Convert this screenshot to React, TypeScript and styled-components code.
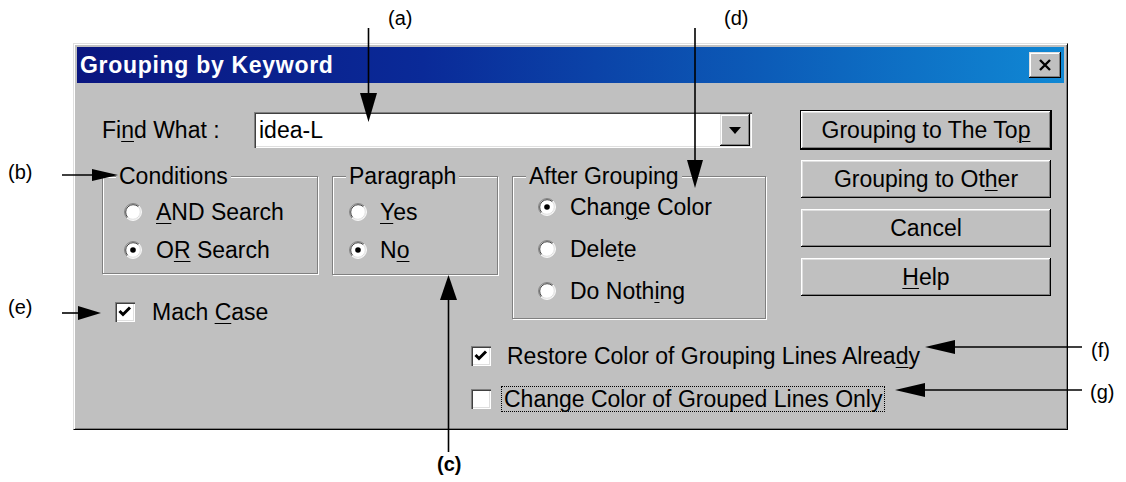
import React from "react";
import styled, { createGlobalStyle } from "styled-components";

const Global = createGlobalStyle`
  html, body { margin: 0; padding: 0; background: #ffffff; }
  body { font-family: "Liberation Sans", Arial, sans-serif; }
`;

const Page = styled.div`
  position: relative;
  width: 1126px;
  height: 482px;
  overflow: hidden;
  background: #ffffff;
  padding: 43px 0 0 73px;
  box-sizing: border-box;
`;

const Dialog = styled.div`
  width: 995px;
  height: 387px;
  box-sizing: border-box;
  background: #c0c0c0;
  border: 1px solid;
  border-color: #dfdfdf #000000 #000000 #dfdfdf;
  box-shadow: inset 1px 1px #ffffff, inset -1px -1px #808080;
  padding: 3px;
  display: flex;
  flex-direction: column;
  font-family: "Liberation Sans", Arial, sans-serif;
  font-size: 23px;
  color: #000;
`;

const TitleBar = styled.div`
  height: 36px;
  flex: none;
  display: flex;
  align-items: center;
  justify-content: space-between;
  padding: 0 3px 0 3px;
  background: linear-gradient(to right, #0a1680 0%, #0a2a98 35%, #0c5cb8 70%, #1088d4 100%);
  color: #ffffff;
  font-weight: bold;
  font-size: 23px;
  letter-spacing: 0.7px;
`;

const CloseButton = styled.div`
  width: 32px;
  height: 26px;
  box-sizing: border-box;
  background: #c0c0c0;
  box-shadow: inset -1px -1px #000, inset 1px 1px #dfdfdf, inset -2px -2px #808080, inset 2px 2px #fff;
  display: flex;
  align-items: center;
  justify-content: center;
`;

const Body = styled.div`
  flex: 1;
  display: grid;
  grid-template-columns: 723px 252px;
  padding-right: 12px;
`;

const MainColumn = styled.div`
  display: flex;
  flex-direction: column;
  padding: 29px 0 0 25px;
`;

const FindRow = styled.div`
  display: flex;
  align-items: center;
  height: 36px;
`;

const FieldLabel = styled.div`
  width: 152px;
`;

const Field = styled.div`
  width: 498px;
  height: 36px;
  box-sizing: border-box;
  background: #fff;
  box-shadow: inset 1px 1px #808080, inset 2px 2px #404040, inset -1px -1px #fff, inset -2px -2px #dfdfdf;
  display: flex;
  align-items: center;
  justify-content: space-between;
  padding: 2px 2px 2px 5px;
`;

const DropButton = styled.div`
  width: 30px;
  height: 32px;
  box-sizing: border-box;
  background: #c0c0c0;
  box-shadow: inset -1px -1px #000, inset 1px 1px #dfdfdf, inset -2px -2px #808080, inset 2px 2px #fff;
  display: flex;
  align-items: center;
  justify-content: center;
`;

const GroupArea = styled.div`
  margin-top: 17px;
  display: grid;
  grid-template-columns: 216px 166px 254px;
  grid-template-rows: auto auto;
  column-gap: 14px;
  align-items: start;
`;

const GroupBox = styled.fieldset<{ $padLeft: number; $padTop: number; $gap: number; $padBottom: number; $rows?: string }>`
  margin: 0;
  min-width: 0;
  box-sizing: border-box;
  border: 1px solid #808080;
  box-shadow: inset 1px 1px #fff, 1px 1px #fff;
  padding: ${(p) => p.$padTop}px 4px ${(p) => p.$padBottom}px ${(p) => p.$padLeft}px;
  display: flex;
  flex-direction: column;
  gap: ${(p) => p.$gap}px;
  grid-row: ${(p) => p.$rows || "1"};
`;

const Legend = styled.legend<{ $shift: number }>`
  margin-left: ${(p) => p.$shift}px;
  padding: 0 3px;
  line-height: 22px;
  background: #c0c0c0;
`;

const OptionRow = styled.div<{ $gap: number }>`
  height: 30px;
  display: flex;
  align-items: center;
  gap: ${(p) => p.$gap}px;
  white-space: nowrap;
`;

const Key = styled.span`
  text-decoration: underline;
  text-underline-offset: 3px;
  text-decoration-thickness: 1px;
`;

const MatchRow = styled.div`
  grid-column: 1 / 3;
  grid-row: 2;
  margin-top: 22px;
  padding-left: 13px;
`;

const BottomOptions = styled.div`
  margin-top: 14px;
  padding-left: 369px;
  display: flex;
  flex-direction: column;
  gap: 13px;
`;

const CheckBox = styled.span`
  width: 20px;
  height: 20px;
  flex: none;
  box-sizing: border-box;
  background: #fff;
  box-shadow: inset 1px 1px #808080, inset 2px 2px #404040, inset -1px -1px #fff, inset -2px -2px #dfdfdf;
  display: flex;
  align-items: center;
  justify-content: center;
`;

const FocusText = styled.span`
  outline: 1px dotted #000;
  outline-offset: 0;
  padding: 0 2px;
  line-height: 24px;
`;

const ButtonColumn = styled.div`
  display: flex;
  flex-direction: column;
  gap: 9px;
  padding-top: 27px;
`;

const PushButton = styled.div<{ $default?: boolean }>`
  height: 40px;
  box-sizing: border-box;
  background: #c0c0c0;
  border: 1px solid ${(p) => (p.$default ? "#000" : "transparent")};
  box-shadow: inset -1px -1px #000, inset 1px 1px #fff, inset -2px -2px #808080, inset 2px 2px #dfdfdf;
  display: flex;
  align-items: center;
  justify-content: center;
  white-space: nowrap;
`;

const Label = styled.div<{ $bold?: boolean }>`
  position: absolute;
  font-family: "Liberation Sans", Arial, sans-serif;
  font-size: 20px;
  line-height: 22px;
  font-weight: ${(p) => (p.$bold ? "bold" : "normal")};
  color: #000;
`;

const Overlay = styled.svg`
  position: absolute;
  left: 0;
  top: 0;
  pointer-events: none;
`;

const Radio: React.FC<{ checked?: boolean }> = ({ checked }) => (
  <svg width="18" height="18" viewBox="0 0 18 18" style={{ flex: "none" }}>
    <circle cx="9" cy="9" r="8" fill="#fff" />
    <path d="M2.99 15.01 A8.5 8.5 0 0 1 15.01 2.99" fill="none" stroke="#808080" strokeWidth="1" />
    <path d="M15.01 2.99 A8.5 8.5 0 0 1 2.99 15.01" fill="none" stroke="#ffffff" strokeWidth="1" />
    <path d="M3.7 14.3 A7.5 7.5 0 0 1 14.3 3.7" fill="none" stroke="#404040" strokeWidth="1" />
    <path d="M14.3 3.7 A7.5 7.5 0 0 1 3.7 14.3" fill="none" stroke="#dfdfdf" strokeWidth="1" />
    {checked && <circle cx="9" cy="9" r="2.8" fill="#000" />}
  </svg>
);

const Check: React.FC<{ checked?: boolean }> = ({ checked }) => (
  <CheckBox>
    {checked && (
      <svg width="16" height="16" viewBox="0 0 16 16">
        <path d="M2.5 7 L6 10.5 L13 3.5" fill="none" stroke="#000" strokeWidth="3" />
      </svg>
    )}
  </CheckBox>
);

export default function App() {
  return (
    <>
      <Global />
      <Page>
        <Dialog>
          <TitleBar>
            <span>Grouping by Keyword</span>
            <CloseButton>
              <svg width="14" height="12" viewBox="0 0 14 12">
                <path d="M2 1 L12 11 M12 1 L2 11" stroke="#000" strokeWidth="2.4" />
              </svg>
            </CloseButton>
          </TitleBar>
          <Body>
            <MainColumn>
              <FindRow>
                <FieldLabel>
                  Fi<Key>n</Key>d What :
                </FieldLabel>
                <Field>
                  <span>idea-L</span>
                  <DropButton>
                    <svg width="12" height="7" viewBox="0 0 12 7">
                      <path d="M0 0 H12 L6 7 Z" fill="#000" />
                    </svg>
                  </DropButton>
                </Field>
              </FindRow>
              <GroupArea>
                <GroupBox $padLeft={21} $padTop={10} $gap={8} $padBottom={8}>
                  <Legend $shift={-8}>Conditions</Legend>
                  <OptionRow $gap={14}>
                    <Radio />
                    <span>
                      <Key>A</Key>ND Search
                    </span>
                  </OptionRow>
                  <OptionRow $gap={14}>
                    <Radio checked />
                    <span>
                      O<Key>R</Key> Search
                    </span>
                  </OptionRow>
                </GroupBox>
                <GroupBox $padLeft={16} $padTop={10} $gap={8} $padBottom={9}>
                  <Legend $shift={-3}>Paragraph</Legend>
                  <OptionRow $gap={13}>
                    <Radio />
                    <span>
                      <Key>Y</Key>es
                    </span>
                  </OptionRow>
                  <OptionRow $gap={13}>
                    <Radio checked />
                    <span>
                      N<Key>o</Key>
                    </span>
                  </OptionRow>
                </GroupBox>
                <GroupBox $padLeft={25} $padTop={5} $gap={12} $padBottom={12} $rows="1 / 3">
                  <Legend $shift={-12}>After Grouping</Legend>
                  <OptionRow $gap={14}>
                    <Radio checked />
                    <span>
                      Chan<Key>g</Key>e Color
                    </span>
                  </OptionRow>
                  <OptionRow $gap={14}>
                    <Radio />
                    <span>
                      Dele<Key>t</Key>e
                    </span>
                  </OptionRow>
                  <OptionRow $gap={14}>
                    <Radio />
                    <span>
                      Do Noth<Key>i</Key>ng
                    </span>
                  </OptionRow>
                </GroupBox>
                <MatchRow>
                  <OptionRow $gap={17}>
                    <Check checked />
                    <span>
                      Mach <Key>C</Key>ase
                    </span>
                  </OptionRow>
                </MatchRow>
              </GroupArea>
              <BottomOptions>
                <OptionRow $gap={16}>
                  <Check checked />
                  <span>
                    Restore Color of Grouping Lines Alrea<Key>d</Key>y
                  </span>
                </OptionRow>
                <OptionRow $gap={11}>
                  <Check />
                  <FocusText>Change Color of Grouped Lines Only</FocusText>
                </OptionRow>
              </BottomOptions>
            </MainColumn>
            <ButtonColumn>
              <PushButton $default>
                <span>
                  Grouping to The To<Key>p</Key>
                </span>
              </PushButton>
              <PushButton>
                <span>
                  Grouping to Ot<Key>h</Key>er
                </span>
              </PushButton>
              <PushButton>
                <span>Cancel</span>
              </PushButton>
              <PushButton>
                <span>
                  <Key>H</Key>elp
                </span>
              </PushButton>
            </ButtonColumn>
          </Body>
        </Dialog>

        <Overlay width="1126" height="482" viewBox="0 0 1126 482">
          <g stroke="#000" strokeWidth="1.6" fill="none">
            <path d="M368.5 28 V95" />
            <path d="M695 28 V162" />
            <path d="M62 175 H95" />
            <path d="M62 313 H80" />
            <path d="M448.5 452 V298" />
            <path d="M1082 347 H952" />
            <path d="M1082 390 H922" />
          </g>
          <g fill="#000">
            <polygon points="360,93 377,93 368.5,122" />
            <polygon points="687,160 703,160 695,188" />
            <polygon points="92,169 92,181 118,175" />
            <polygon points="78,306 78,320 101,313" />
            <polygon points="440,300 457,300 448.5,275" />
            <polygon points="955,340 955,354 925,347" />
            <polygon points="925,383 925,397 895,390" />
          </g>
        </Overlay>

        <Label style={{ left: 388, top: 7 }}>(a)</Label>
        <Label style={{ left: 724, top: 7 }}>(d)</Label>
        <Label style={{ left: 8, top: 161 }}>(b)</Label>
        <Label style={{ left: 8, top: 296 }}>(e)</Label>
        <Label $bold style={{ left: 437, top: 453 }}>(c)</Label>
        <Label style={{ left: 1091, top: 339 }}>(f)</Label>
        <Label style={{ left: 1090, top: 381 }}>(g)</Label>
      </Page>
    </>
  );
}
